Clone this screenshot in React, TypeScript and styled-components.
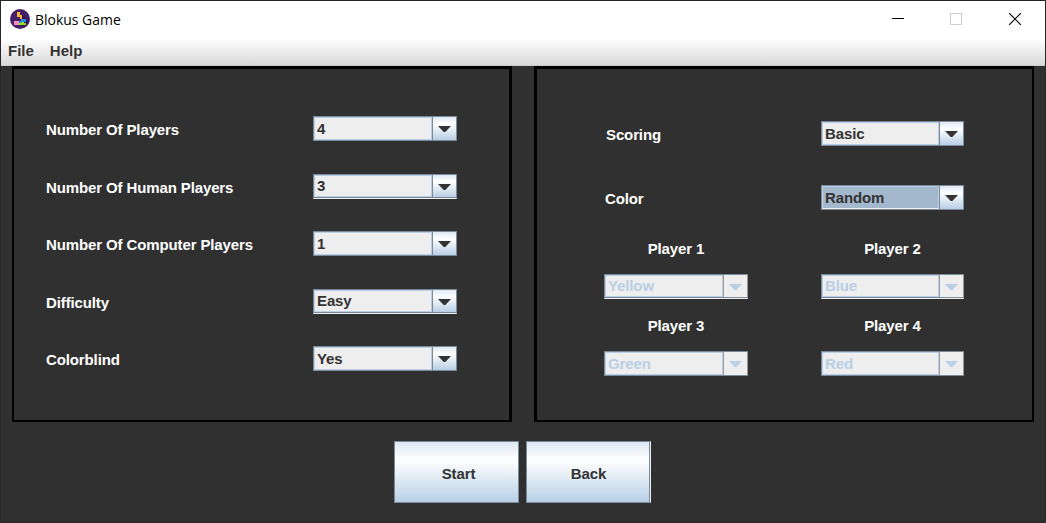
import React from 'react';
import styled, { createGlobalStyle } from 'styled-components';

const Global = createGlobalStyle`
  * { box-sizing: border-box; }
  body { margin: 0; background: #303030; font-family: "Liberation Sans", Arial, sans-serif; font-weight: 700; font-size: 15px; line-height: 18px; letter-spacing: -0.12px; color: #333; overflow: hidden; }
`;
const Window = styled.div`
  width: 1046px; height: 523px; background: #303030;
  border: 1px solid #272727; display: flex; flex-direction: column;
`;
const TitleBar = styled.header`
  height: 37px; background: #fff; display: flex; align-items: center; padding: 0 0 1px 9px;
  flex: none;
`;
const Title = styled.span`
  font: 400 15px/20px "Open Sans", "Noto Sans", sans-serif; color: #000; margin-left: 5px; flex: 1;
  letter-spacing: 0;
  span { display: inline-block; transform-origin: 0 50%; transform: scaleX(0.93); }
`;
const Controls = styled.div`
  display: flex; gap: 47px; margin-right: 24px;
  svg:first-child { margin-right: -1px; }
`;
const MenuBar = styled.nav`
  height: 28px; flex: none; display: flex; gap: 16px; padding: 4px 7px 0; letter-spacing: 0;
  background: linear-gradient(#fff, #dadada); border-bottom: 1px solid #ccc;
`;
const Panels = styled.main`
  display: flex; gap: 22px; padding-left: 11px; flex: none;
`;
const Panel = styled.section<{ $side: 'left' | 'right' }>`
  width: 500px; height: 356px; border: solid #000; flex: none;
  border-width: ${p => (p.$side === 'left' ? '3px 3px 2px 2px' : '3px 2px 2px 3px')};
  padding: ${p => (p.$side === 'left' ? '47px 52px 0 32px' : '52px 68px 0 67px')};
`;
const Row = styled.div<{ $h: number; $indent?: number }>`
  height: ${p => p.$h}px; display: flex; justify-content: space-between; align-items: flex-start;
  padding-left: ${p => p.$indent || 0}px;
`;
const Label = styled.label`
  color: #fff; padding-top: 5px; white-space: nowrap;
`;
const Combo = styled.div<{ $w: number; $off?: boolean; $edge?: boolean }>`
  width: ${p => p.$w}px; height: 25px; display: flex; flex: none;
  border: 1px solid #7a8a99;
  border-right-color: ${p => (p.$off ? '#999' : '#7a8a99')};
  color: ${p => (p.$off ? '#b8cfe5' : '#333')};
  box-shadow: ${p => (p.$edge ? 'inset 0 -1px #7a8a99' : 'none')};
  border-bottom-color: ${p => (p.$edge ? '#eee' : '#7a8a99')};
`;
const Value = styled.div<{ $focus?: boolean; $edge?: boolean }>`
  flex: 1; border: 1px solid #b8cfe5; padding-left: 2px; line-height: ${p => (p.$edge ? 19 : 21)}px;
  border-bottom-color: ${p => (p.$focus ? '#eee' : '#b8cfe5')};
  background: ${p => (p.$focus ? '#a3b8cc' : '#eee')};
  margin-bottom: ${p => (p.$edge ? 1 : 0)}px;
`;
const Arrow = styled.div<{ $off?: boolean; $edge?: boolean }>`
  width: 24px; display: flex; align-items: center; justify-content: center;
  border-left: 1px solid ${p => (p.$off ? '#999' : '#7a8a99')};
  background: ${p => (p.$off ? '#eee' : 'linear-gradient(#dde8f3, #fff 30%, #b8cfe5)')};
  margin-bottom: ${p => (p.$edge ? 1 : 0)}px;
`;
const PlayerGrid = styled.div`
  display: grid; grid-template-columns: 144px 143px; justify-content: space-between;
  grid-template-rows: 77px 77px;
`;
const Player = styled.div`
  display: flex; flex-direction: column; gap: 16px; text-align: center; color: #fff;
  > div { text-align: left; }
`;
const Actions = styled.footer`
  display: flex; gap: 7px; padding: 19px 0 0 393px;
`;
const Button = styled.button<{ $edge?: boolean }>`
  width: 125px; height: 62px; font: inherit; letter-spacing: inherit; color: #333;
  padding: ${p => (p.$edge ? '4px 0 0' : '4px 0 0 4px')};
  border: 1px solid #7a8a99; border-radius: 0;
  border-right-color: ${p => (p.$edge ? '#eee' : '#7a8a99')};
  box-shadow: ${p => (p.$edge ? 'inset -1px 0 #7a8a99' : 'none')};
  background: linear-gradient(#dde8f3, #fff 30%, #b8cfe5);
`;

const Logo = () => (
  <svg width="20" height="20" viewBox="0 0 20 20">
    <circle cx="10" cy="10" r="10" fill="#45206a" />
    <path d="M12 5l7 8-4 5-6-2z" fill="#341650" />
    <path d="M7 3h3v3h2v4h-2V8H7z" fill="#fdb62f" />
    <path d="M4 12h5v4H4z" fill="#f98cc4" />
    <path d="M11 10h5v3h-2v1H9v-2h2z" fill="#2489ef" />
    <path d="M9 14h2v-1h3v1h2v2H9z" fill="#8ee01f" />
  </svg>
);

type SelectProps = { value: string; w?: number; off?: boolean; focus?: boolean; edge?: boolean };
const Select = ({ value, w = 144, off, focus, edge }: SelectProps) => (
  <Combo $w={w} $off={off} $edge={edge}>
    <Value $focus={focus} $edge={edge}>{value}</Value>
    <Arrow $off={off} $edge={edge}>
      <svg width="13" height="7" viewBox="0 0 13 7">
        <path d="M0 1h13L7.3 7H5.7z" fill={off ? '#b8cfe5' : '#333'} />
      </svg>
    </Arrow>
  </Combo>
);

const settings = [
  { label: 'Number Of Players', value: '4', h: 58 },
  { label: 'Number Of Human Players', value: '3', h: 57, edge: true },
  { label: 'Number Of Computer Players', value: '1', h: 58 },
  { label: 'Difficulty', value: 'Easy', h: 57, edge: true },
  { label: 'Colorblind', value: 'Yes', h: 57 },
];
const colors = ['Yellow', 'Blue', 'Green', 'Red'];

export default function App() {
  return (
    <Window>
      <Global />
      <TitleBar>
        <Logo />
        <Title><span>Blokus Game</span></Title>
        <Controls>
          <svg width="12" height="12"><path d="M0 5.5h12" stroke="#000" /></svg>
          <svg width="12" height="12"><path d="M.5.5h11v11H.5z" fill="none" stroke="#ccc" /></svg>
          <svg width="12" height="12"><path d="M0 0l12 12M12 0L0 12" stroke="#000" strokeWidth="1.2" /></svg>
        </Controls>
      </TitleBar>
      <MenuBar><span>File</span><span>Help</span></MenuBar>
      <Panels>
        <Panel $side="left">
          {settings.map(s => (
            <Row key={s.label} $h={s.h}>
              <Label>{s.label}</Label>
              <Select value={s.value} edge={s.edge} />
            </Row>
          ))}
        </Panel>
        <Panel $side="right">
          <Row $h={64} $indent={2}><Label>Scoring</Label><Select w={143} value="Basic" /></Row>
          <Row $h={55} $indent={1}><Label>Color</Label><Select w={143} value="Random" focus /></Row>
          <PlayerGrid>
            {colors.map((c, i) => (
              <Player key={c}>
                Player {i + 1}
                <Select value={c} w={i % 2 ? 143 : 144} off edge={i < 2} />
              </Player>
            ))}
          </PlayerGrid>
        </Panel>
      </Panels>
      <Actions>
        <Button>Start</Button>
        <Button $edge>Back</Button>
      </Actions>
    </Window>
  );
}
